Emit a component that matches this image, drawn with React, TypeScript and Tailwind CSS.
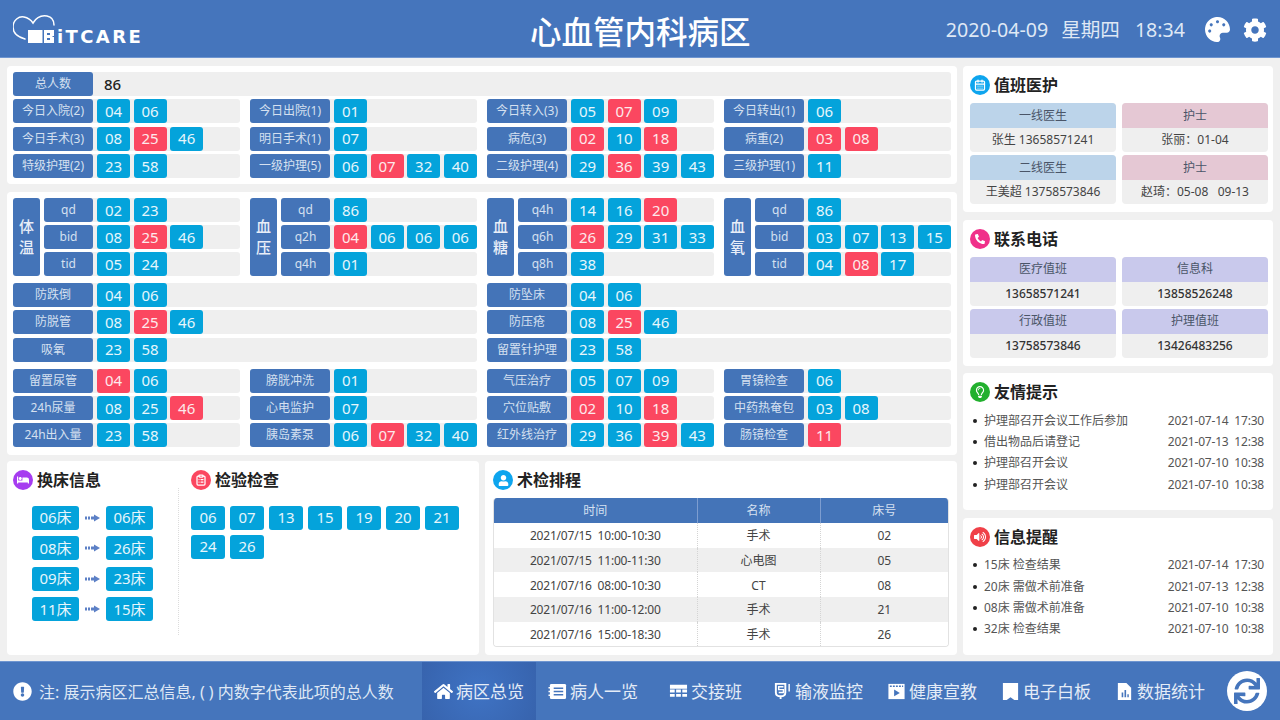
import React from 'react';
import { FaPalette, FaCog, FaHome, FaExclamationCircle, FaSync, FaPhoneAlt, FaUser, FaBed, FaRegLightbulb, FaVolumeUp } from 'react-icons/fa';
import { CalendarDays, ClipboardList } from 'lucide-react';

// chip value, a leading "!" marks a red one
type Chips = string[];

const Chip = ({ v }: { v: string }) => {
  const red = v.startsWith('!');
  return (
    <div className={`w-[33px] h-full shrink-0 rounded-[3px] flex items-center justify-center text-[15px] text-[#e6f6fc] ${red ? 'bg-[#fb4760] text-[#fdeaec]' : 'bg-[#04a3db]'}`}>
      {red ? v.slice(1) : v}
    </div>
  );
};

const Row = ({ label, chips, narrow }: { label: string; chips: Chips; narrow?: boolean }) => (
  <div className="flex h-[24px] gap-[4px] bg-[#efefef] rounded-[3px]">
    <div className={`${narrow ? 'w-[49px]' : 'w-[80px]'} shrink-0 rounded-[3px] bg-[#4474b8] flex items-center justify-center text-[12px] text-[#d5e0f0] whitespace-nowrap`}>
      {label}
    </div>
    <div className="flex gap-[3.6px] h-full">
      {chips.map((c, i) => <Chip key={i} v={c} />)}
    </div>
  </div>
);

const Rows = ({ children, className = '' }: { children: React.ReactNode; className?: string }) => (
  <div className={`grid gap-y-[3.3px] gap-x-[10px] ${className}`}>{children}</div>
);

const Vital = ({ name, rows }: { name: string; rows: [string, Chips][] }) => (
  <div className="flex gap-[4px]">
    <div className="w-[27px] shrink-0 rounded-[3px] bg-[#4474b8] flex flex-col items-center justify-center gap-[4px] text-[15px] leading-[17px] font-medium text-[#e8eef8]">
      {name.split('').map(c => <span key={c}>{c}</span>)}
    </div>
    <div className="flex-1 grid gap-y-[3.3px]">
      {rows.map(([l, c]) => <Row key={l} label={l} chips={c} narrow />)}
    </div>
  </div>
);

const Title = ({ icon, bg, text }: { icon: React.ReactNode; bg: string; text: string }) => (
  <div className="flex items-center gap-[4px] h-[20px]">
    <div className={`w-[20px] h-[20px] rounded-full flex items-center justify-center text-white ${bg}`}>{icon}</div>
    <span className="text-[16px] font-bold text-[#222] leading-none whitespace-nowrap">{text}</span>
  </div>
);

const InfoCell = ({ head, body, headBg, dark }: { head: string; body: string; headBg: string; dark?: boolean }) => (
  <div className="rounded-[4px] overflow-hidden bg-[#efefef] text-[12px]">
    <div className={`h-[25px] flex items-center justify-center text-[#4a5568] ${headBg}`}>{head}</div>
    <div className={`h-[24px] flex items-center justify-center whitespace-pre ${dark ? 'text-[#333] font-medium' : 'text-[#444]'}`}>{body}</div>
  </div>
);

const InfoCard = ({ title, cells, dark }: { title: React.ReactNode; cells: [string, string, string][]; dark?: boolean }) => (
  <div className="h-[146px] bg-white rounded-[4px] pt-[9px] pl-[7px] pr-[5px]">
    {title}
    <div className="grid grid-cols-2 gap-x-[6px] gap-y-[3px] mt-[8px]">
      {cells.map(([h, b, bg], i) => <InfoCell key={i} head={h} body={b} headBg={bg} dark={dark} />)}
    </div>
  </div>
);

const Notice = ({ title, items }: { title: React.ReactNode; items: [string, string][] }) => (
  <div className="flex-1 bg-white rounded-[4px] pt-[9px] pl-[7px] pr-[9px]">
    {title}
    <div className="mt-[8px]">
      {items.map(([t, d], i) => (
        <div key={i} className="h-[21.3px] flex items-center text-[12px] text-[#555] pl-[3px]">
          <span className="w-[4px] h-[4px] rounded-full bg-[#222] mr-[7px] shrink-0" />
          <span className="flex-1 whitespace-nowrap">{t}</span>
          <span className="whitespace-pre tracking-[-0.2px]">{d}</span>
        </div>
      ))}
    </div>
  </div>
);

const Arrow = () => (
  <svg width="15" height="8" viewBox="0 0 15 8" className="shrink-0 text-[#5c80c6]" fill="currentColor">
    <rect x="0" y="2.5" width="2" height="3" />
    <rect x="3" y="2.5" width="2" height="3" />
    <rect x="6" y="2.5" width="3" height="3" />
    <path d="M9 0.5 15 4 9 7.5z" />
  </svg>
);

const swaps = [['06', '06'], ['08', '26'], ['09', '23'], ['11', '15']];
const tests = ['06', '07', '13', '15', '19', '20', '21', '24', '26'];
const schedule = [
  ['2021/07/15  10:00-10:30', '手术', '02'],
  ['2021/07/15  11:00-11:30', '心电图', '05'],
  ['2021/07/16  08:00-10:30', 'CT', '08'],
  ['2021/07/16  11:00-12:00', '手术', '21'],
  ['2021/07/16  15:00-18:30', '手术', '26'],
];

const NavIcon = ({ children }: { children: React.ReactNode }) => (
  <svg width="19" height="19" viewBox="0 0 20 20" className="shrink-0">{children}</svg>
);

const NavItem = ({ icon, text, active, className = '' }: { icon: React.ReactNode; text: string; active?: boolean; className?: string }) => (
  <div className={`h-full px-[12px] flex items-center gap-[3px] text-[17px] text-[#e4ecf7] whitespace-nowrap ${active ? 'bg-[radial-gradient(circle,#3f73c4,#3763ad)]' : ''} ${className}`}>
    {icon}
    <span className="mt-[1px]">{text}</span>
  </div>
);

const blueHead = 'bg-[#bcd4ea]';
const pinkHead = 'bg-[#e5c8d4]';
const lilacHead = 'bg-[#c9c9ec]';

export default function App() {
  return (
    <div className="w-[1280px] h-[720px] overflow-hidden flex flex-col bg-[#f0f0f0] font-['Noto_Sans','Noto_Sans_CJK_SC',sans-serif]">
      {/* header */}
      <header className="h-[58px] shrink-0 bg-[#4575bc] border-b border-[#6e95d0] flex items-center pl-[13px] pr-[13px] relative">
        <div className="relative w-[128px] h-[30px] mt-[1px]">
          <svg width="44" height="30" viewBox="0 0 44 30" className="absolute left-0 top-0" fill="none" stroke="#fff" strokeWidth="1.5">
            <path d="M12 25C5 23 0 19 0 13 0 6 6 2 11 3c4 .8 7 3 9 6 3-5 8-8 14-7 5 1 7 4 7 9" strokeLinecap="round" />
          </svg>
          <svg width="26" height="13" viewBox="0 0 26 13" className="absolute left-[15px] top-[16px]">
            <path fill="#fff" d="M0 0h26v13H0z" />
            <path fill="#4575bc" d="M14.500 0h1.500v13h-1.500zM19 3h3v2h-3zM19 8h3v2h-3zM24.500 6h1.500v1h-1.500z" />
          </svg>
          <span className="absolute left-[44px] top-[11px] text-[18px] leading-[24px] font-bold tracking-[2.4px] text-white font-['DejaVu_Sans',sans-serif]">iTCARE</span>
        </div>
        <div className="absolute left-[530px] top-[10px] text-[31.5px] leading-[44px] font-medium text-white whitespace-nowrap">心血管内科病区</div>
        <div className="ml-auto mt-[3px] flex items-center text-[19.6px] text-[#dfe8f5] whitespace-nowrap">
          <span>2020-04-09</span>
          <span className="ml-[13px]">星期四</span>
          <span className="ml-[15px]">18:34</span>
          <FaPalette className="ml-[20px] text-white" size={25} />
          <FaCog className="ml-[13px] text-white" size={24} />
        </div>
      </header>

      <main className="flex-1 min-h-0 flex gap-[6px] px-[7px] pt-[8px] pb-[6px]">
        {/* left column */}
        <div className="w-[950px] flex flex-col">
          <section className="bg-white rounded-[4px] p-[6px]">
            <Rows className="grid-cols-4">
              <div className="col-span-4 flex h-[24px] gap-[4px] bg-[#efefef] rounded-[3px]">
                <div className="w-[80px] rounded-[3px] bg-[#4474b8] flex items-center justify-center text-[12px] text-[#d5e0f0]">总人数</div>
                <span className="ml-[7px] text-[15px] leading-[25px] font-medium text-[#222]">86</span>
              </div>
              <Row label="今日入院(2)" chips={['04', '06']} />
              <Row label="今日出院(1)" chips={['01']} />
              <Row label="今日转入(3)" chips={['05', '!07', '09']} />
              <Row label="今日转出(1)" chips={['06']} />
              <Row label="今日手术(3)" chips={['08', '!25', '46']} />
              <Row label="明日手术(1)" chips={['07']} />
              <Row label="病危(3)" chips={['!02', '10', '!18']} />
              <Row label="病重(2)" chips={['!03', '!08']} />
              <Row label="特级护理(2)" chips={['23', '58']} />
              <Row label="一级护理(5)" chips={['06', '!07', '32', '40']} />
              <Row label="二级护理(4)" chips={['29', '!36', '39', '43']} />
              <Row label="三级护理(1)" chips={['11']} />
            </Rows>
          </section>

          <section className="mt-[8px] bg-white rounded-[4px] p-[6px] pb-[8px]">
            <div className="grid grid-cols-4 gap-x-[10px]">
              <Vital name="体温" rows={[['qd', ['02', '23']], ['bid', ['08', '!25', '46']], ['tid', ['05', '24']]]} />
              <Vital name="血压" rows={[['qd', ['86']], ['q2h', ['!04', '06', '06', '06']], ['q4h', ['01']]]} />
              <Vital name="血糖" rows={[['q4h', ['14', '16', '!20']], ['q6h', ['!26', '29', '31', '33']], ['q8h', ['38']]]} />
              <Vital name="血氧" rows={[['qd', ['86']], ['bid', ['03', '07', '13', '15']], ['tid', ['04', '!08', '17']]]} />
            </div>
            <Rows className="grid-cols-2 mt-[6.5px]">
              <Row label="防跌倒" chips={['04', '06']} />
              <Row label="防坠床" chips={['04', '06']} />
              <Row label="防脱管" chips={['08', '!25', '46']} />
              <Row label="防压疮" chips={['08', '!25', '46']} />
              <Row label="吸氧" chips={['23', '58']} />
              <Row label="留置针护理" chips={['23', '58']} />
            </Rows>
            <Rows className="grid-cols-4 mt-[7px]">
              <Row label="留置尿管" chips={['!04', '06']} />
              <Row label="膀胱冲洗" chips={['01']} />
              <Row label="气压治疗" chips={['05', '07', '09']} />
              <Row label="胃镜检查" chips={['06']} />
              <Row label="24h尿量" chips={['08', '25', '!46']} />
              <Row label="心电监护" chips={['07']} />
              <Row label="穴位贴敷" chips={['!02', '10', '!18']} />
              <Row label="中药热奄包" chips={['03', '08']} />
              <Row label="24h出入量" chips={['23', '58']} />
              <Row label="胰岛素泵" chips={['06', '!07', '32', '40']} />
              <Row label="红外线治疗" chips={['29', '36', '!39', '43']} />
              <Row label="肠镜检查" chips={['!11']} />
            </Rows>
          </section>

          <div className="mt-[6px] flex-1 min-h-0 flex gap-[6px]">
            <section className="w-[472px] bg-white rounded-[4px] pt-[9px] flex">
              <div className="w-[172px] pl-[6px]">
                <Title bg="bg-[#a63cf0]" icon={<FaBed size={12} />} text="换床信息" />
                <div className="mt-[-2px] h-[147px] pt-[17.5px] pl-[19px] border-r border-dotted border-[#dcdcdc] flex flex-col gap-[6.5px]">
                  {swaps.map(([a, b], i) => (
                    <div key={i} className="flex items-center h-[24px]">
                      <div className="w-[47px] h-full rounded-[3px] bg-[#04a3db] text-[#e6f6fc] text-[15px] flex items-center justify-center whitespace-nowrap">{a}床</div>
                      <div className="mx-[6px]"><Arrow /></div>
                      <div className="w-[47px] h-full rounded-[3px] bg-[#04a3db] text-[#e6f6fc] text-[15px] flex items-center justify-center whitespace-nowrap">{b}床</div>
                    </div>
                  ))}
                </div>
              </div>
              <div className="flex-1 pl-[12px]">
                <Title bg="bg-[#fb4760]" icon={<ClipboardList size={12} strokeWidth={2.5} />} text="检验检查" />
                <div className="mt-[15.5px] w-[280px] flex flex-wrap gap-x-[5px] gap-y-[5px]">
                  {tests.map(t => (
                    <div key={t} className="w-[34px] h-[24px] rounded-[3px] bg-[#04a3db] text-[#e6f6fc] text-[15px] flex items-center justify-center">{t}</div>
                  ))}
                </div>
              </div>
            </section>

            <section className="flex-1 bg-white rounded-[4px] pt-[9px] pl-[8px] pr-[8px]">
              <Title bg="bg-[#0ea5ee]" icon={<FaUser size={11} />} text="术检排程" />
              <div className="mt-[8px] w-[456px] rounded-[4px] overflow-hidden border border-t-0 border-[#e2e2e2]">
                <table className="w-full table-fixed border-collapse text-[12px] text-[#444]">
                  <thead>
                    <tr className="h-[25px] bg-[#4474b8] text-[#d5e0f0]">
                      <th className="w-[203px] font-normal border-r border-[#7d9dd0]">时间</th>
                      <th className="w-[123px] font-normal border-r border-[#7d9dd0]">名称</th>
                      <th className="font-normal">床号</th>
                    </tr>
                  </thead>
                  <tbody>
                    {schedule.map((r, i) => (
                      <tr key={i} className={`h-[24.6px] ${i % 2 ? 'bg-[#efefef]' : 'bg-white'}`}>
                        <td className="pt-[2px] text-center whitespace-pre tracking-[-0.2px] border-r border-dotted border-[#d4d4d4]">{r[0]}</td>
                        <td className="pt-[2px] text-center border-r border-dotted border-[#d4d4d4]">{r[1]}</td>
                        <td className="pt-[2px] text-center">{r[2]}</td>
                      </tr>
                    ))}
                  </tbody>
                </table>
              </div>
            </section>
          </div>
        </div>

        {/* right column */}
        <div className="w-[310px] flex flex-col gap-[7.5px]">
          <InfoCard
            title={<Title bg="bg-[#0ea5ee]" icon={<CalendarDays size={12} strokeWidth={2.5} />} text="值班医护" />}
            cells={[
              ['一线医生', '张生 13658571241', blueHead],
              ['护士', '张丽：01-04', pinkHead],
              ['二线医生', '王美超 13758573846', blueHead],
              ['护士', '赵琦：05-08   09-13', pinkHead],
            ]}
          />
          <InfoCard
            dark
            title={<Title bg="bg-[#f0308a]" icon={<FaPhoneAlt size={10} />} text="联系电话" />}
            cells={[
              ['医疗值班', '13658571241', lilacHead],
              ['信息科', '13858526248', lilacHead],
              ['行政值班', '13758573846', lilacHead],
              ['护理值班', '13426483256', lilacHead],
            ]}
          />
          <Notice
            title={<Title bg="bg-[#22b02e]" icon={<FaRegLightbulb size={12} />} text="友情提示" />}
            items={[
              ['护理部召开会议工作后参加', '2021-07-14  17:30'],
              ['借出物品后请登记', '2021-07-13  12:38'],
              ['护理部召开会议', '2021-07-10  10:38'],
              ['护理部召开会议', '2021-07-10  10:38'],
            ]}
          />
          <Notice
            title={<Title bg="bg-[#f04048]" icon={<FaVolumeUp size={12} />} text="信息提醒" />}
            items={[
              ['15床 检查结果', '2021-07-14  17:30'],
              ['20床 需做术前准备', '2021-07-13  12:38'],
              ['08床 需做术前准备', '2021-07-10  10:38'],
              ['32床 检查结果', '2021-07-10  10:38'],
            ]}
          />
        </div>
      </main>

      {/* footer */}
      <footer className="h-[59px] shrink-0 bg-[#4575bc] border-t border-[#6e95d0] flex items-center pl-[13px]">
        <FaExclamationCircle size={19} className="text-white shrink-0" />
        <span className="ml-[7px] mt-[1px] w-[383px] shrink-0 text-[16px] text-[#dfe8f5] whitespace-pre">注: 展示病区汇总信息, ( ) 内数字代表此项的总人数</span>
        <div className="h-full flex items-center">
          <NavItem active icon={<FaHome size={19} className="text-white shrink-0" />} text="病区总览" />
          <NavItem text="病人一览" icon={
            <NavIcon>
              <rect x="2" y="2" width="17" height="16" rx="1.500" fill="#fff" />
              <path d="M0.500 6h3M0.500 10h3M0.500 14h3" stroke="#fff" strokeWidth="1.500" />
              <path d="M6 6.500h10M6 10h10M6 13.500h10" stroke="#4575bc" strokeWidth="1.600" />
            </NavIcon>
          } />
          <NavItem className="ml-[7px]" text="交接班" icon={
            <NavIcon>
              <path fill="#fff" d="M1 3h18v4H1zM1 8h5v3H1zM7.500 8h5v3h-5zM14 8h5v3h-5zM1 12.500h5v3H1zM7.500 12.500h5v3h-5zM14 12.500h5v3h-5z" />
            </NavIcon>
          } />
          <NavItem className="ml-[7px]" text="输液监控" icon={
            <NavIcon>
              <path fill="none" stroke="#fff" strokeWidth="2" d="M3 2h10v9c0 3-2 4-5 4s-5-1-5-4zM8 15v3" />
              <path fill="none" stroke="#fff" strokeWidth="1.500" d="M11 5H6v3h5v3H6M17 2v8" />
            </NavIcon>
          } />
          <NavItem text="健康宣教" icon={
            <NavIcon>
              <rect x="1.500" y="2" width="17" height="16" fill="#fff" />
              <path d="M3 4.500h14" stroke="#4575bc" strokeWidth="1.500" strokeDasharray="2 1.200" />
              <path d="M7.500 8l6 3.500-6 3.500z" fill="#4575bc" />
            </NavIcon>
          } />
          <NavItem text="电子白板" icon={
            <NavIcon>
              <path fill="#fff" d="M2 1h16v18h-4l-4-3-4 3H2z" />
            </NavIcon>
          } />
          <NavItem text="数据统计" icon={
            <NavIcon>
              <path fill="#fff" d="M3 1h9l5 5v13H3z" />
              <path fill="#4575bc" d="M7 11h1.700v5H7zM10 8.500h1.700V16H10zM13 13h1.500v3H13z" />
            </NavIcon>
          } />
        </div>
        <div className="ml-[10px] w-[40px] h-[40px] shrink-0 rounded-full bg-white flex items-center justify-center">
          <FaSync size={26} className="text-[#4575bc]" />
        </div>
      </footer>
    </div>
  );
}
